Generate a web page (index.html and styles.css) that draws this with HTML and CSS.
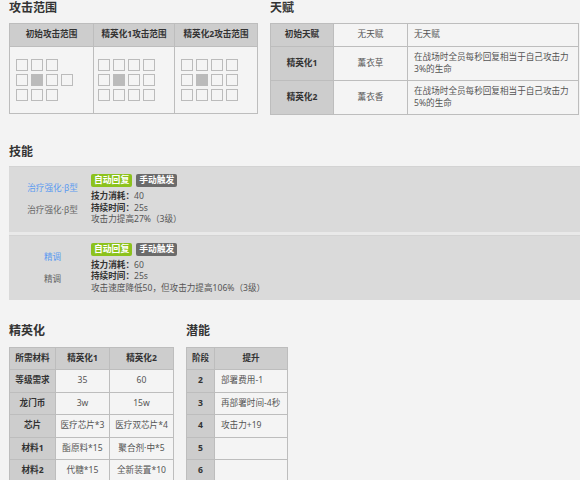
FILE: index.html
```html
<!DOCTYPE html>
<html lang="zh">
<head>
<meta charset="utf-8">
<link rel="stylesheet" href="styles.css">
</head>
<body>
<div class="page">
  <div class="top">
    <section class="range">
      <h2 class="h">攻击范围</h2>
      <table class="tbl range-tbl">
        <colgroup><col class="rc1"><col class="rc2"><col class="rc3"></colgroup>
        <tr><th>初始攻击范围</th><th>精英化1攻击范围</th><th>精英化2攻击范围</th></tr>
        <tr>
          <td class="gcell">
            <div class="grid">
              <span class="sq"></span><span class="sq"></span><span class="sq"></span><span class="sq no"></span>
              <span class="sq"></span><span class="sq on"></span><span class="sq"></span><span class="sq"></span>
              <span class="sq"></span><span class="sq"></span><span class="sq"></span><span class="sq no"></span>
            </div>
          </td>
          <td class="gcell g2">
            <div class="grid">
              <span class="sq"></span><span class="sq"></span><span class="sq"></span><span class="sq"></span>
              <span class="sq"></span><span class="sq on"></span><span class="sq"></span><span class="sq"></span>
              <span class="sq"></span><span class="sq"></span><span class="sq"></span><span class="sq"></span>
            </div>
          </td>
          <td class="gcell">
            <div class="grid">
              <span class="sq"></span><span class="sq"></span><span class="sq"></span><span class="sq"></span>
              <span class="sq"></span><span class="sq on"></span><span class="sq"></span><span class="sq"></span>
              <span class="sq"></span><span class="sq"></span><span class="sq"></span><span class="sq"></span>
            </div>
          </td>
        </tr>
      </table>
    </section>
    <section class="talent">
      <h2 class="h">天赋</h2>
      <table class="tbl talent-tbl">
        <colgroup><col class="tc1"><col class="tc2"><col class="tc3"></colgroup>
        <tr class="r1"><th>初始天赋</th><td class="c">无天赋</td><td class="l">无天赋</td></tr>
        <tr class="r2"><th>精英化1</th><td class="c">薰衣草</td><td class="l">在战场时全员每秒回复相当于自己攻击力3%的生命</td></tr>
        <tr class="r2"><th>精英化2</th><td class="c">薰衣香</td><td class="l">在战场时全员每秒回复相当于自己攻击力5%的生命</td></tr>
      </table>
    </section>
  </div>

  <section class="skills">
    <h2 class="h">技能</h2>
    <div class="skill">
      <div class="sname">
        <span class="blue">治疗强化·β型</span>
        <span>治疗强化·β型</span>
      </div>
      <div class="sbody">
        <div class="tags"><span class="tag auto">自动回复</span><span class="tag man">手动触发</span></div>
        <div class="ln"><b>技力消耗：</b>40</div>
        <div class="ln"><b>持续时间：</b>25s</div>
        <div class="ln">攻击力提高27%（3级）</div>
      </div>
    </div>
    <div class="skill">
      <div class="sname">
        <span class="blue">精调</span>
        <span>精调</span>
      </div>
      <div class="sbody">
        <div class="tags"><span class="tag auto">自动回复</span><span class="tag man">手动触发</span></div>
        <div class="ln"><b>技力消耗：</b>60</div>
        <div class="ln"><b>持续时间：</b>25s</div>
        <div class="ln">攻击速度降低50，但攻击力提高106%（3级）</div>
      </div>
    </div>
  </section>

  <div class="bottom">
    <section class="elite">
      <h2 class="h">精英化</h2>
      <table class="tbl elite-tbl">
        <colgroup><col class="ec1"><col class="ec2"><col class="ec3"></colgroup>
        <tr><th>所需材料</th><th>精英化1</th><th>精英化2</th></tr>
        <tr><th>等级需求</th><td>35</td><td>60</td></tr>
        <tr><th>龙门币</th><td>3w</td><td>15w</td></tr>
        <tr><th>芯片</th><td>医疗芯片*3</td><td>医疗双芯片*4</td></tr>
        <tr><th>材料1</th><td>酯原料*15</td><td>聚合剂·中*5</td></tr>
        <tr><th>材料2</th><td>代糖*15</td><td>全新装置*10</td></tr>
      </table>
    </section>
    <section class="potential">
      <h2 class="h">潜能</h2>
      <table class="tbl pot-tbl">
        <colgroup><col class="pc1"><col class="pc2"></colgroup>
        <tr><th>阶段</th><th>提升</th></tr>
        <tr><th>2</th><td class="l">部署费用-1</td></tr>
        <tr><th>3</th><td class="l">再部署时间-4秒</td></tr>
        <tr><th>4</th><td class="l">攻击力+19</td></tr>
        <tr><th>5</th><td class="l"></td></tr>
        <tr><th>6</th><td class="l"></td></tr>
      </table>
    </section>
  </div>
</div>
</body>
</html>
```
FILE: styles.css
```css
* { box-sizing: border-box; }
html, body { margin: 0; padding: 0; }
body {
  background: #f3f3f3;
  color: #555;
  font-family: "Noto Sans", "Noto Sans CJK SC", sans-serif;
  font-size: 8.6px;
  line-height: 11.5px;
  width: 580px;
  height: 480px;
  overflow: hidden;
}
.page { padding-left: 9px; }
.h {
  margin: 0;
  font-size: 12px;
  line-height: 15px;
  font-weight: bold;
  color: #333;
}
.top { display: flex; gap: 12px; }
.top .h { margin-bottom: 8px; }
.tbl {
  border-collapse: collapse;
  table-layout: fixed;
  background: #f4f4f4;
}
.tbl th, .tbl td {
  border: 1px solid #bdbdbd;
  padding: 0 3px;
  text-align: center;
  font-weight: normal;
}
.tbl th { background: #cdcdcd; color: #333; font-weight: bold; }
.tbl td { color: #555; }
.tbl .l { text-align: left; padding: 0 1px 0 6px; }

.range-tbl { width: 248px; }
.rc1 { width: 84px; } .rc2 { width: 81px; } .rc3 { width: 83px; }
.range-tbl th { height: 23px; }
.range-tbl td.gcell { height: 67px; padding: 0 0 0 6px; text-align: left; vertical-align: middle; }
.range-tbl td.g2 { padding-left: 4px; }
.grid { display: grid; grid-template-columns: repeat(4, 12px); gap: 3px; }
.sq { width: 12px; height: 12px; border: 1px solid #bbb; background: #f4f4f4; }
.sq.on { background: #bbb; }
.sq.no { visibility: hidden; }

.talent-tbl { width: 308px; }
.tc1 { width: 63px; } .tc2 { width: 74px; } .tc3 { width: 171px; }
.talent-tbl .r1 > * { height: 23px; }
.talent-tbl .r2 > * { height: 34px; }

.skills { margin-top: 29px; }
.skills .h { margin-bottom: 7px; }
.skill {
  display: flex;
  background: #dadada;
  border-top: 1px solid #d3d3d3;
  padding: 7px 0 6px 5px;
}
.skill + .skill { box-shadow: 0 -3px 0 #e9e9e9; margin-top: 3px; }
.sname {
  width: 77px;
  display: flex;
  flex-direction: column;
  justify-content: center;
  align-items: center;
  gap: 10.5px;
  color: #666;
}
.blue { color: #5c9af0; }
.sbody { display: flex; flex-direction: column; }
.tags { display: flex; gap: 4px; margin-bottom: 4px; }
.tag {
  display: inline-block;
  height: 13px;
  line-height: 13px;
  padding: 0 3px;
  border-radius: 2px;
  color: #fff;
  font-weight: bold;
  font-size: 8.8px;
}
.tag.auto { background: #8cc21d; }
.tag.man { background: #6b6b6b; }
.ln b { color: #333; }

.bottom { display: flex; gap: 12px; margin-top: 23px; }
.bottom .h { margin-bottom: 9px; }
.elite-tbl { width: 164px; }
.ec1 { width: 46px; } .ec2 { width: 54px; } .ec3 { width: 64px; }
.elite-tbl th, .elite-tbl td { height: 22.4px; padding: 0 2px; }
.pot-tbl { width: 101px; }
.pc1 { width: 28px; } .pc2 { width: 73px; }
.pot-tbl th, .pot-tbl td { height: 22.4px; }
.pot-tbl td.l { padding-left: 6px; }
```
